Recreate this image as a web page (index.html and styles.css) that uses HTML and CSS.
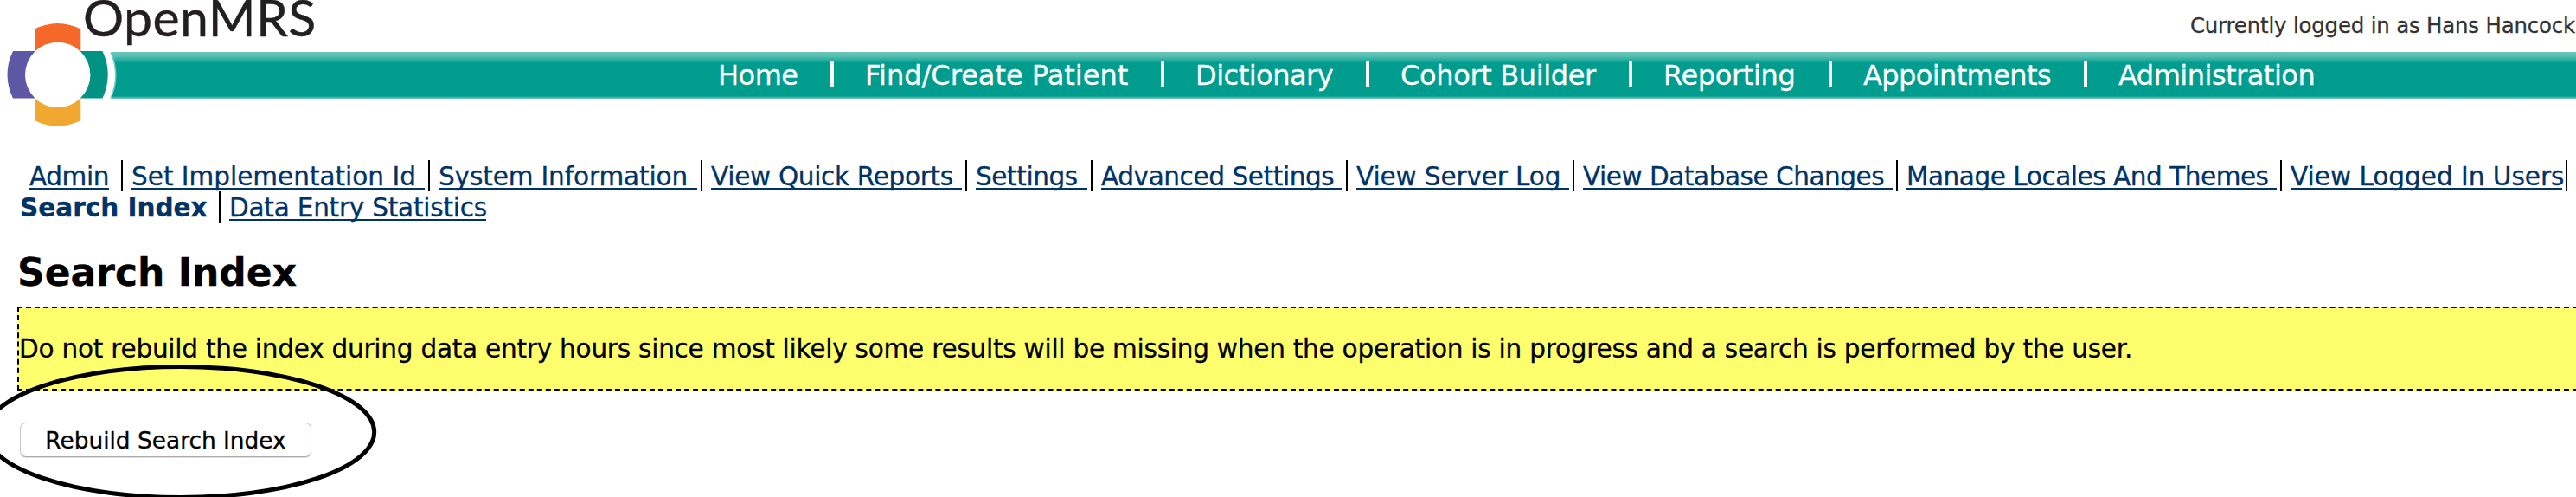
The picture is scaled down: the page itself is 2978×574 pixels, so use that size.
FILE: index.html
```html
<!DOCTYPE html>
<html lang="en">
<head>
<meta charset="utf-8">
<title>OpenMRS - Search Index</title>
<link rel="stylesheet" href="styles.css">
</head>
<body>
<header class="header">
  <div class="userbar"><div class="wordmark">OpenMRS</div><span class="user">Currently logged in as Hans Hancock</span></div>
  <nav class="nav">
    <a class="home">Home</a><a class="find">Find/Create Patient</a><a class="dict">Dictionary</a><a class="cohort">Cohort Builder</a><a class="report">Reporting</a><a class="appt">Appointments</a><a class="adm">Administration</a>
  </nav>
  <svg class="logo" width="140" height="150" viewBox="0 0 140 150">
    <path d="M0 58H127.700Q139.500 87 127.700 115H0Z" fill="#fff"/>
    <path d="M128 60.500Q139.500 87 128 113.500" fill="none" stroke="#7accc3" stroke-width="1.500"/>
    <path d="M40 60V33.500Q66.500 20.500 93.300 33.500V60Z" fill="#f66828"/>
    <path d="M40 112V139.300Q66.500 152 93.300 139.300V112Z" fill="#f0a830"/>
    <path d="M42 59H15Q2 86 15 113.500H42Z" fill="#5e57a6"/>
    <path d="M92 59H118.500Q131 86 118.500 113.500H92Z" fill="#009384"/>
    <circle cx="66.700" cy="86.400" r="37.700" fill="#fff"/>
  </svg>
</header>
<main class="content">
  <ul class="menu first">
    <li><a class="snug">Admin</a></li><li><a>Set Implementation Id</a></li><li><a class="faint">System Information</a></li><li><a class="medium">View Quick Reports</a></li><li><a class="snug">Settings</a></li><li><a class="snug">Advanced Settings</a></li><li><a class="faint">View Server Log</a></li><li><a class="tight">View Database Changes</a></li><li><a class="tight">Manage Locales And Themes</a></li><li><a>View Logged In Users</a></li><li></li>
  </ul>
  <ul class="menu second">
    <li><b>Search Index</b></li><li><a class="slight">Data Entry Statistics</a></li>
  </ul>
  <h1>Search Index</h1>
  <p class="notice"><span>Do not rebuild the index during data entry hours since most likely some results will be missing when the operation is in progress and a search is performed by the user.</span></p>
  <button class="rebuild" type="button">Rebuild Search Index</button>
  <svg class="ring" width="440" height="160" viewBox="0 0 440 160"><ellipse cx="208.500" cy="85" rx="224.200" ry="75.500" fill="none" stroke="#000" stroke-width="5"/></svg>
</main>
</body>
</html>
```
FILE: styles.css
```css
* { box-sizing: border-box; }
body {
  position: relative;
  margin: 0;
  height: 574px;
  overflow: hidden;
  background: #fff;
  color: #000;
  font-family: Verdana, "DejaVu Sans", sans-serif;
  -webkit-text-stroke: 0.3px;
}
.header { position: relative; height: 186px; }
.userbar {
  display: flex;
  justify-content: space-between;
  height: 60px;
  padding: 0 1px 0 96px;
}
.wordmark {
  height: 56px;
  color: #231f20;
  font: 59px/40px Lato, sans-serif;
  letter-spacing: 0.4px;
  -webkit-text-stroke: 0.4px #231f20;
  white-space: nowrap;
}
.user { font-size: 24.4px; line-height: 59px; letter-spacing: -0.16px; color: #333; white-space: nowrap; }
.nav {
  display: grid;
  grid-template-columns: 131px 382px 237px 304px 231px 295px 400px;
  align-items: start;
  height: 54px;
  padding: 10px 0 0 829px;
  background: linear-gradient(#6ac6ba 0, #56beb2 5px, #009d8f 13px, #009d8f 51px, #55bbb0 53px, #7dccc4 54px);
}
.nav a {
  height: 31px;
  padding-left: 36px;
  border-left: 4px solid #fff;
  color: #fff;
  font-size: 32px;
  line-height: 34px;
  letter-spacing: -0.5px;
  white-space: nowrap;
}
.nav .home { padding-left: 1px; border-left: 0; }
.nav .find { letter-spacing: 0; }
.nav .cohort, .nav .report { letter-spacing: -0.35px; }
.nav .appt { letter-spacing: -0.6px; }
.logo { position: absolute; left: 0; top: 0; }
.menu {
  display: grid;
  height: 36px;
  margin: 0;
  padding: 0;
  list-style: none;
  font-size: 29.5px;
  line-height: 36px;
  color: #003366;
  white-space: nowrap;
}
.first { grid-template-columns: 106px 355px 315px 306px 145px 295px 262px 374px 444px 330px 12px; margin-top: -1px; padding-left: 34px; }
.second { grid-template-columns: 230px 320px; padding-left: 23px; }
.menu li { height: 36px; padding: 0 4px 0 10px; border-left: 2px solid #000; line-height: 39px; }
.menu li:first-child { padding: 0 14px 0 0; border-left: 0; }
.menu a { display: block; height: 34px; border-bottom: 2px solid #003366; }
.menu .faint { letter-spacing: -0.12px; }
.menu .slight { letter-spacing: -0.22px; }
.menu .medium { letter-spacing: -0.3px; }
.menu .snug { letter-spacing: -0.4px; }
.menu .tight { letter-spacing: -0.46px; }
.second a { width: 297px; }
h1 { margin: 32px 0 0 20px; font-size: 44px; line-height: 52px; }
.notice {
  display: flex;
  align-items: center;
  width: 2990px;
  height: 97px;
  margin: 13px 0 37px 20px;
  border: 2px dashed #000;
  background: #ffff6e;
  font-size: 29.5px;
  line-height: 36px;
  letter-spacing: -0.23px;
  white-space: nowrap;
}
.rebuild {
  display: block;
  width: 337px;
  height: 40px;
  margin: 0 0 0 23px;
  padding: 1px 0 0;
  border: 1px solid #c8c8c8;
  border-bottom-color: #aaa;
  border-radius: 7px;
  background: #fff;
  box-shadow: 0 1px 1px #ddd;
  color: #000;
  font: 26.4px/37px Verdana, "DejaVu Sans", sans-serif;
}
.ring { position: absolute; left: 0; top: 414px; }
```
